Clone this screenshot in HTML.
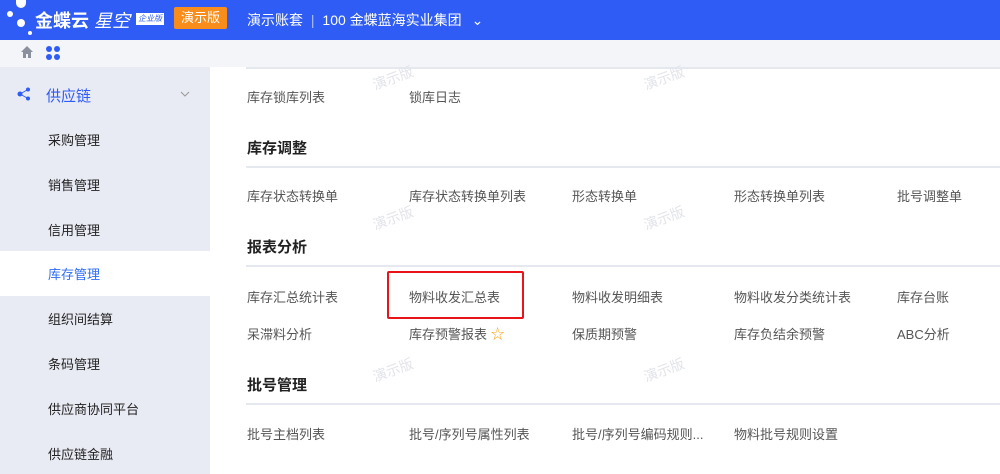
<!DOCTYPE html>
<html><head><meta charset="utf-8"><style>
*{margin:0;padding:0;box-sizing:border-box}
body{width:1000px;height:474px;overflow:hidden;background:#fff;font-family:"Liberation Sans","Noto Sans CJK SC",sans-serif;position:relative;color:#333}
.a{position:absolute;white-space:nowrap}
.hdr{left:0;top:0;width:1000px;height:40px;background:#2e5cf5}
.tb{left:0;top:40px;width:1000px;height:27px;background:#f4f5f9}
.sb{left:0;top:67px;width:210px;height:407px;background:#e9ebf4}
.si{font-size:13px;color:#222;left:48px}
.t{font-size:13px;color:#555}
.h{font-size:15px;font-weight:bold;color:#222;left:247px}
.ln{left:246px;width:754px;height:2px;background:#e6e8ef}
.wm{font-size:14px;color:#e2e4ea;transform:rotate(-20deg)}
</style></head><body>
<div class="a hdr"></div>
<div class="a" style="left:16px;top:0px;width:10px;height:8px;border-radius:0 0 5px 5px;background:#fff"></div>
<div class="a" style="left:7px;top:11px;width:6px;height:6px;border-radius:50%;background:#fff"></div>
<div class="a" style="left:17px;top:19px;width:8px;height:8px;border-radius:50%;background:#fff"></div>
<div class="a" style="left:28px;top:31px;width:4px;height:4px;border-radius:50%;background:#fff"></div>
<div class="a" style="left:35px;top:7px;font-size:18px;color:#fff;font-weight:bold">金蝶云<span style="font-weight:normal;font-style:italic"> 星空</span></div>
<div class="a" style="left:136px;top:13px;width:28px;height:12px;background:#fff;color:#2e5cf5;font-size:8px;line-height:12px;text-align:center;font-style:italic">企业版</div>
<div class="a" style="left:174px;top:7px;width:53px;height:22px;background:#f98d1c;color:#fff;font-size:13px;line-height:22px;text-align:center;border-radius:2px">演示版</div>
<div class="a" style="left:247px;top:10px;font-size:14px;color:#fff">演示账套 <span style="opacity:.6;margin:0 4px">|</span> 100 金蝶蓝海实业集团 <span style="margin-left:6px">⌄</span></div>
<div class="a tb"></div>
<svg class="a" style="left:20px;top:45px" width="14" height="14" viewBox="0 0 14 14"><path d="M7 1L1 7h2v6h3V9h2v4h3V7h2z" fill="#8a909c"/></svg>
<svg class="a" style="left:45px;top:45px" width="16" height="16" viewBox="0 0 16 16" fill="#2e5cf5"><circle cx="4" cy="4" r="3"/><circle cx="12" cy="4" r="3"/><circle cx="4" cy="12" r="3"/><circle cx="12" cy="12" r="3"/></svg>
<div class="a sb"></div>
<div class="a" style="left:0;top:251px;width:210px;height:45px;background:#fff"></div>
<svg class="a" style="left:16px;top:86px" width="16" height="16" viewBox="0 0 16 16" fill="#2e5cf5"><circle cx="4" cy="8" r="2.5"/><circle cx="12" cy="3.5" r="2"/><circle cx="12" cy="12.5" r="2"/><path d="M4 8L12 3.5M4 8L12 12.5" stroke="#2e5cf5" stroke-width="1"/></svg>
<div class="a" style="left:46px;top:85px;font-size:15px;color:#2e5cf5">供应链</div>
<svg class="a" style="left:180px;top:91px" width="10" height="6" viewBox="0 0 10 6"><path d="M1 1l4 4 4-4" fill="none" stroke="#999" stroke-width="1"/></svg>
<div class="a si" style="top:130px">采购管理</div>
<div class="a si" style="top:175px">销售管理</div>
<div class="a si" style="top:220px">信用管理</div>
<div class="a si" style="top:264px;color:#2e6cf5">库存管理</div>
<div class="a si" style="top:309px">组织间结算</div>
<div class="a si" style="top:354px">条码管理</div>
<div class="a si" style="top:399px">供应商协同平台</div>
<div class="a si" style="top:444px">供应链金融</div>
<div class="a ln" style="top:67px"></div>
<div class="a t" style="left:247px;top:87px">库存锁库列表</div>
<div class="a t" style="left:409px;top:87px">锁库日志</div>
<div class="a h" style="top:137px">库存调整</div>
<div class="a ln" style="top:166px"></div>
<div class="a t" style="left:247px;top:186px">库存状态转换单</div>
<div class="a t" style="left:409px;top:186px">库存状态转换单列表</div>
<div class="a t" style="left:572px;top:186px">形态转换单</div>
<div class="a t" style="left:734px;top:186px">形态转换单列表</div>
<div class="a t" style="left:897px;top:186px">批号调整单</div>
<div class="a h" style="top:236px">报表分析</div>
<div class="a ln" style="top:265px"></div>
<div class="a t" style="left:247px;top:287px">库存汇总统计表</div>
<div class="a t" style="left:409px;top:287px">物料收发汇总表</div>
<div class="a t" style="left:572px;top:287px">物料收发明细表</div>
<div class="a t" style="left:734px;top:287px">物料收发分类统计表</div>
<div class="a t" style="left:897px;top:287px">库存台账</div>
<div class="a" style="left:387px;top:271px;width:137px;height:48px;border:2px solid #e8141a;border-radius:2px"></div>
<div class="a t" style="left:247px;top:324px">呆滞料分析</div>
<div class="a t" style="left:409px;top:324px">库存预警报表 <span style="color:#f5a623;font-size:14px">☆</span></div>
<div class="a t" style="left:572px;top:324px">保质期预警</div>
<div class="a t" style="left:734px;top:324px">库存负结余预警</div>
<div class="a t" style="left:897px;top:324px">ABC分析</div>
<div class="a h" style="top:374px">批号管理</div>
<div class="a ln" style="top:403px"></div>
<div class="a t" style="left:247px;top:424px">批号主档列表</div>
<div class="a t" style="left:409px;top:424px">批号/序列号属性列表</div>
<div class="a t" style="left:572px;top:424px">批号/序列号编码规则...</div>
<div class="a t" style="left:734px;top:424px">物料批号规则设置</div>
<div class="a wm" style="left:372px;top:68px">演示版</div>
<div class="a wm" style="left:643px;top:68px">演示版</div>
<div class="a wm" style="left:372px;top:208px">演示版</div>
<div class="a wm" style="left:643px;top:208px">演示版</div>
<div class="a wm" style="left:643px;top:360px">演示版</div>
<div class="a wm" style="left:372px;top:360px">演示版</div>
</body></html>
